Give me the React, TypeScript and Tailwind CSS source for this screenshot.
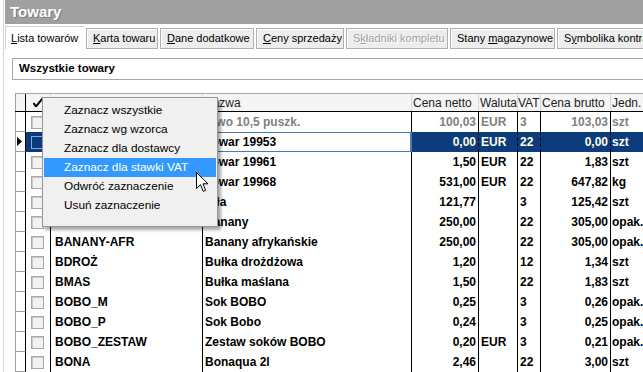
import React from "react";

type Row = {
  sym: string;
  name: string;
  netto: string;
  wal: string;
  vat: string;
  brutto: string;
  jm: string;
  gray?: boolean;
  sel?: boolean;
};

const rows: Row[] = [
  { sym: "PIWO10", name: "Piwo 10,5 puszk.", netto: "100,03", wal: "EUR", vat: "3", brutto: "103,03", jm: "szt", gray: true },
  { sym: "T19953", name: "Towar 19953", netto: "0,00", wal: "EUR", vat: "22", brutto: "0,00", jm: "szt", sel: true },
  { sym: "T19961", name: "Towar 19961", netto: "1,50", wal: "EUR", vat: "22", brutto: "1,83", jm: "szt" },
  { sym: "T19968", name: "Towar 19968", netto: "531,00", wal: "EUR", vat: "22", brutto: "647,82", jm: "kg" },
  { sym: "PILA", name: "Piła", netto: "121,77", wal: "", vat: "3", brutto: "125,42", jm: "szt" },
  { sym: "BANANY", name: "Banany", netto: "250,00", wal: "", vat: "22", brutto: "305,00", jm: "opak." },
  { sym: "BANANY-AFR", name: "Banany afrykańskie", netto: "250,00", wal: "", vat: "22", brutto: "305,00", jm: "opak." },
  { sym: "BDROŻ", name: "Bułka drożdżowa", netto: "1,20", wal: "", vat: "12", brutto: "1,34", jm: "szt" },
  { sym: "BMAS", name: "Bułka maślana", netto: "1,50", wal: "", vat: "22", brutto: "1,83", jm: "szt" },
  { sym: "BOBO_M", name: "Sok BOBO", netto: "0,25", wal: "", vat: "3", brutto: "0,26", jm: "opak." },
  { sym: "BOBO_P", name: "Sok Bobo", netto: "0,24", wal: "", vat: "3", brutto: "0,25", jm: "opak." },
  { sym: "BOBO_ZESTAW", name: "Zestaw soków BOBO", netto: "0,20", wal: "EUR", vat: "3", brutto: "0,21", jm: "opak." },
  { sym: "BONA", name: "Bonaqua 2l", netto: "2,46", wal: "", vat: "22", brutto: "3,00", jm: "szt" },
];

const tabs = [
  { pre: "", key: "L", post: "ista towarów", w: "w-[79px]", active: true },
  { pre: "", key: "K", post: "arta towaru", w: "w-[72px]" },
  { pre: "", key: "D", post: "ane dodatkowe", w: "w-[94px]" },
  { pre: "", key: "C", post: "eny sprzedaży", w: "w-[88px]" },
  { pre: "S", key: "k", post: "ładniki kompletu", w: "w-[102px]", disabled: true },
  { pre: "Stany\u00a0", key: "m", post: "agazynowe", w: "w-[105px]" },
  { pre: "S", key: "y", post: "mbolika kontrahentów", w: "w-[110px]" },
];

const menuItems = [
  "Zaznacz wszystkie",
  "Zaznacz wg wzorca",
  "Zaznacz dla dostawcy",
  "Zaznacz dla stawki VAT",
  "Odwróć zaznaczenie",
  "Usuń zaznaczenie",
];

const Checkbox: React.FC<{ sel?: boolean }> = ({ sel }) => (
  <div
    className={
      sel
        ? "w-[13px] h-[13px] border border-[#8aa6cc] bg-[#0c3c7c]"
        : "w-[13px] h-[13px] border border-[#a8a8a8] bg-[#f2f2f2] shadow-[inset_1px_1px_0_#c8c8c8]"
    }
  />
);

const GridRow: React.FC<{ row: Row }> = ({ row }) => {
  const sep = row.sel ? "border-r border-dashed border-[#000]" : "border-r border-[#000]";
  const color = row.gray ? "text-[#808080]" : row.sel ? "text-[#fffde0]" : "text-black";
  return (
    <div className={`flex h-[20px] font-bold text-[12px] ${color} ${row.sel ? "bg-[#0c3c7c]" : ""}`}>
      <div className="w-[11px] shrink-0 border-l border-[#a0a0a0] border-r border-r-[#000] border-b border-b-[#a0a0a0] bg-white flex items-center">
        {row.sel && (
          <svg width="5" height="9" viewBox="0 0 5 9" className="ml-[1px]">
            <path d="M0 0 L5 4.5 L0 9 Z" fill="#000" />
          </svg>
        )}
      </div>
      <div className={`w-[25px] shrink-0 flex items-center pl-[5px] ${sep}`}>
        <Checkbox sel={row.sel} />
      </div>
      <div className={`w-[152px] shrink-0 flex items-center pl-[4px] overflow-hidden whitespace-nowrap ${sep}`}>
        {row.sym}
      </div>
      {row.sel ? (
        <div className="w-[209px] shrink-0 flex items-center pl-[1px] overflow-hidden whitespace-nowrap bg-white text-black border border-[#4a7ab5] border-r-2">
          {row.name}
        </div>
      ) : (
        <div className={`w-[209px] shrink-0 flex items-center pl-[2px] overflow-hidden whitespace-nowrap ${sep}`}>
          {row.name}
        </div>
      )}
      <div className={`w-[67px] shrink-0 flex items-center justify-end pr-[2px] ${sep}`}>{row.netto}</div>
      <div className={`w-[39px] shrink-0 flex items-center pl-[2px] ${sep}`}>{row.wal}</div>
      <div className={`w-[23px] shrink-0 flex items-center pl-[2px] ${sep}`}>{row.vat}</div>
      <div className={`w-[70px] shrink-0 flex items-center justify-end pr-[2px] ${sep}`}>{row.brutto}</div>
      <div className={`w-[40px] shrink-0 flex items-center pl-[1px] whitespace-nowrap overflow-hidden ${row.sel ? "text-white" : ""}`}>
        {row.jm}
      </div>
    </div>
  );
};

export default function App() {
  return (
    <div
      className="relative w-[643px] h-[372px] overflow-hidden bg-white flex"
      style={{ fontFamily: '"Liberation Sans", Arial, sans-serif' }}
    >
      <div className="w-[4px] shrink-0 border-r border-[#d4d4d4]" />
      <div className="flex-1 flex flex-col min-w-0">
        {/* title */}
        <div className="ml-[1px] h-[24px] shrink-0 bg-[#a0a0a0] flex items-center pl-[5px]">
          <span className="text-white font-bold text-[15px] [text-shadow:1px_1px_0_#7a7a7a]">Towary</span>
        </div>

        {/* tabs */}
        <div className="h-[24px] shrink-0 flex items-end gap-[2px] pl-[1px] mt-[1px]">
          {tabs.map((t, i) =>
            t.active ? (
              <div
                key={i}
                className={`${t.w} shrink-0 h-[23px] bg-white border-l border-t border-[#d0d0d0] flex items-center pl-[5px] text-[11px] text-black whitespace-nowrap`}
              >
                <span>
                  {t.pre}
                  <span className="underline">{t.key}</span>
                  {t.post}
                </span>
              </div>
            ) : (
              <div
                key={i}
                className={`${t.w} shrink-0 h-[21px] bg-[#ededed] border border-[#b0b0b0] shadow-[inset_1px_1px_0_#ffffff] flex items-center pl-[6px] text-[11px] whitespace-nowrap overflow-hidden ${
                  t.disabled ? "text-[#a0a0a0] [text-shadow:1px_1px_0_#ffffff]" : "text-black"
                }`}
              >
                <span>
                  {t.pre}
                  <span className="underline">{t.key}</span>
                  {t.post}
                </span>
              </div>
            )
          )}
        </div>

        {/* filter */}
        <div className="mt-[9px] ml-[8px] h-[22px] shrink-0 border-l border-t border-b border-[#a8a8a8] flex items-center pl-[6px]">
          <span className="font-bold text-[11.5px] text-black">Wszystkie towary</span>
        </div>

        {/* grid */}
        <div className="mt-[13px] ml-[11px] flex flex-col">
          <div className="flex h-[19px] text-[12px] text-[#222] bg-[#f5f5f5] border-t border-[#a8a8a8] border-b border-b-[#000]">
            <div className="w-[11px] shrink-0 border-l border-[#a0a0a0] border-r border-r-[#000]" />
            <div className="w-[25px] shrink-0 flex items-center pl-[7px] border-r border-[#d8d8d8]">
              <svg width="10" height="9" viewBox="0 0 10 9">
                <path d="M0.5 5 L3 8.5 L9.5 0.5" stroke="#000" strokeWidth="2" fill="none" />
              </svg>
            </div>
            <div className="w-[152px] shrink-0 flex items-center pl-[3px] border-r border-[#d8d8d8]">Symbol</div>
            <div className="w-[209px] shrink-0 flex items-center pl-[1px] border-r border-[#d8d8d8]">Nazwa</div>
            <div className="w-[67px] shrink-0 flex items-center pl-[1px] border-r border-[#d8d8d8] whitespace-nowrap">Cena netto</div>
            <div className="w-[39px] shrink-0 flex items-center pl-[1px] border-r border-[#d8d8d8] overflow-hidden">Waluta</div>
            <div className="w-[23px] shrink-0 flex items-center border-r border-[#d8d8d8] overflow-hidden">VAT</div>
            <div className="w-[70px] shrink-0 flex items-center pl-[1px] border-r border-[#d8d8d8] whitespace-nowrap">Cena brutto</div>
            <div className="w-[40px] shrink-0 flex items-center pl-[1px] whitespace-nowrap overflow-hidden">Jedn. sprz.</div>
          </div>
          {rows.map((r) => (
            <GridRow key={r.sym} row={r} />
          ))}
        </div>
      </div>

      {/* context menu */}
      <div className="absolute left-[42px] top-[97px] w-[176px] bg-[#f0f0f0] border border-[#979797] pt-[3px] pb-[11px] px-[1px] shadow-[3px_3px_3px_rgba(0,0,0,0.35)]">
        {menuItems.map((m, i) => (
          <div
            key={m}
            className={`h-[19px] flex items-center pl-[20px] text-[11.8px] whitespace-nowrap ${
              i === 3 ? "bg-[#3399ff] text-white" : "text-black"
            }`}
          >
            {m}
          </div>
        ))}
      </div>

      {/* mouse cursor */}
      <svg className="absolute left-[196px] top-[172px]" width="13" height="21" viewBox="0 0 13 21">
        <path
          d="M0.5 0.5 L0.5 16.5 L4.5 12.7 L7.2 19.3 L9.6 18.3 L7 11.8 L12 11.8 Z"
          fill="#fff"
          stroke="#000"
          strokeWidth="1"
          strokeLinejoin="miter"
        />
      </svg>
    </div>
  );
}
